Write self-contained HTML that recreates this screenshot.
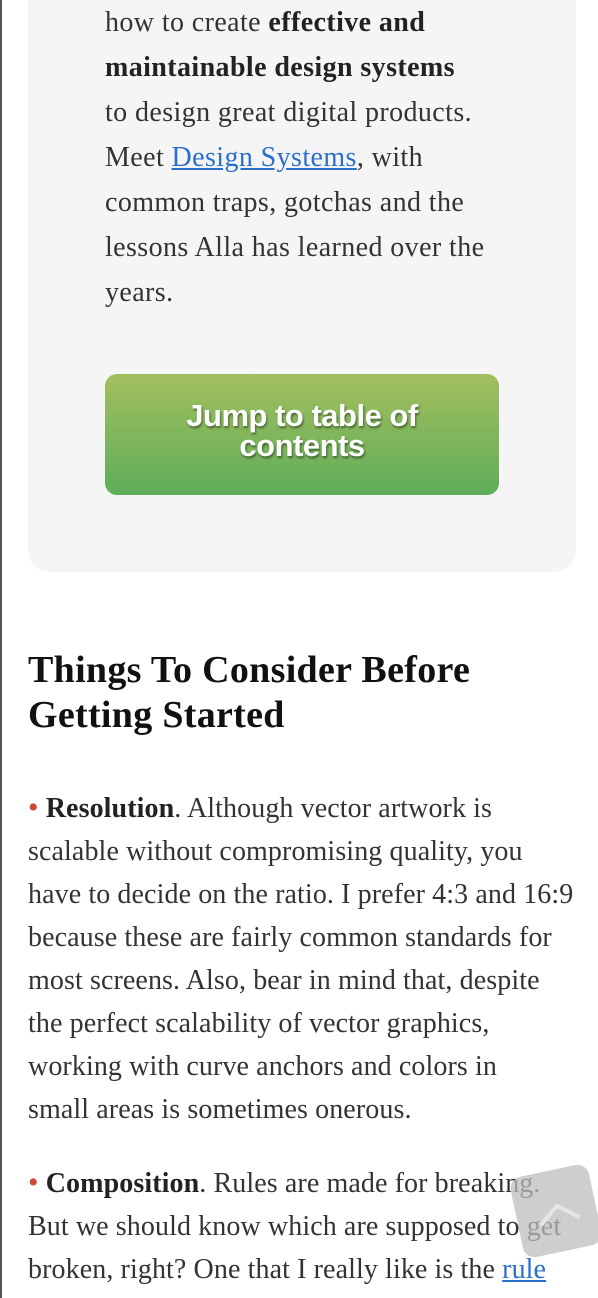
<!DOCTYPE html>
<html><head><meta charset="utf-8"><style>
html,body{margin:0;padding:0;background:#fff;}
body{width:598px;height:1298px;overflow:hidden;position:relative;font-family:"Liberation Serif",serif;color:#333;}
.lb{position:absolute;left:0;top:0;width:2px;height:1298px;background:#555;}
.box{position:absolute;left:28px;top:-40px;width:548px;height:612px;background:#f5f5f5;border-radius:0 0 22px 22px;}
.intro{position:absolute;left:105px;top:0;font-size:28px;letter-spacing:0.4px;line-height:45px;white-space:nowrap;color:#333;}
a{color:#2a6fc9;text-decoration:underline;}
b{color:#222;}
.btn{position:absolute;left:105px;top:374px;width:394px;height:121px;border-radius:12px;background:linear-gradient(#a3bf5e,#5fad5a);color:#fff;font-family:"Liberation Sans",sans-serif;font-weight:bold;font-size:31px;line-height:30px;text-align:center;display:flex;align-items:center;justify-content:center;text-shadow:1px 2px 2px rgba(0,0,0,.45);letter-spacing:-0.5px;padding-bottom:8px;box-sizing:border-box;}
h2{position:absolute;left:28px;top:648px;margin:0;font-size:38px;letter-spacing:0.3px;line-height:45px;color:#111;font-weight:bold;white-space:nowrap;}
.p{position:absolute;left:28px;font-size:28px;letter-spacing:0.1px;line-height:43px;white-space:nowrap;color:#333;}
.dot{color:#d0473a;font-size:30px;}
.up{position:absolute;left:516px;top:1170px;width:80px;height:82px;background:rgba(190,190,190,.75);border-radius:12px;transform:rotate(-12deg);}
</style></head><body>
<div class="lb"></div>
<div class="box"></div>
<div class="intro" style="top:0">how to create <b>effective and</b><br><b>maintainable design systems</b><br>to design great digital products.<br>Meet <a>Design Systems</a>, with<br>common traps, gotchas and the<br>lessons Alla has learned over the<br>years.</div>
<div class="btn">Jump to table of<br>contents</div>
<h2>Things To Consider Before<br>Getting Started</h2>
<div class="p" style="top:786px"><span class="dot">•</span> <b>Resolution</b>. Although vector artwork is<br>scalable without compromising quality, you<br>have to decide on the ratio. I prefer 4:3 and 16:9<br>because these are fairly common standards for<br>most screens. Also, bear in mind that, despite<br>the perfect scalability of vector graphics,<br>working with curve anchors and colors in<br>small areas is sometimes onerous.</div>
<div class="p" style="top:1161px"><span class="dot">•</span> <b>Composition</b>. Rules are made for breaking.<br>But we should know which are supposed to get<br>broken, right? One that I really like is the <a>rule</a></div>
<div class="up"><svg width="80" height="82" viewBox="0 0 80 82"><path d="M22 52 L42 36 L62 52" fill="none" stroke="#e6e6e6" stroke-width="4"/></svg></div>
</body></html>
